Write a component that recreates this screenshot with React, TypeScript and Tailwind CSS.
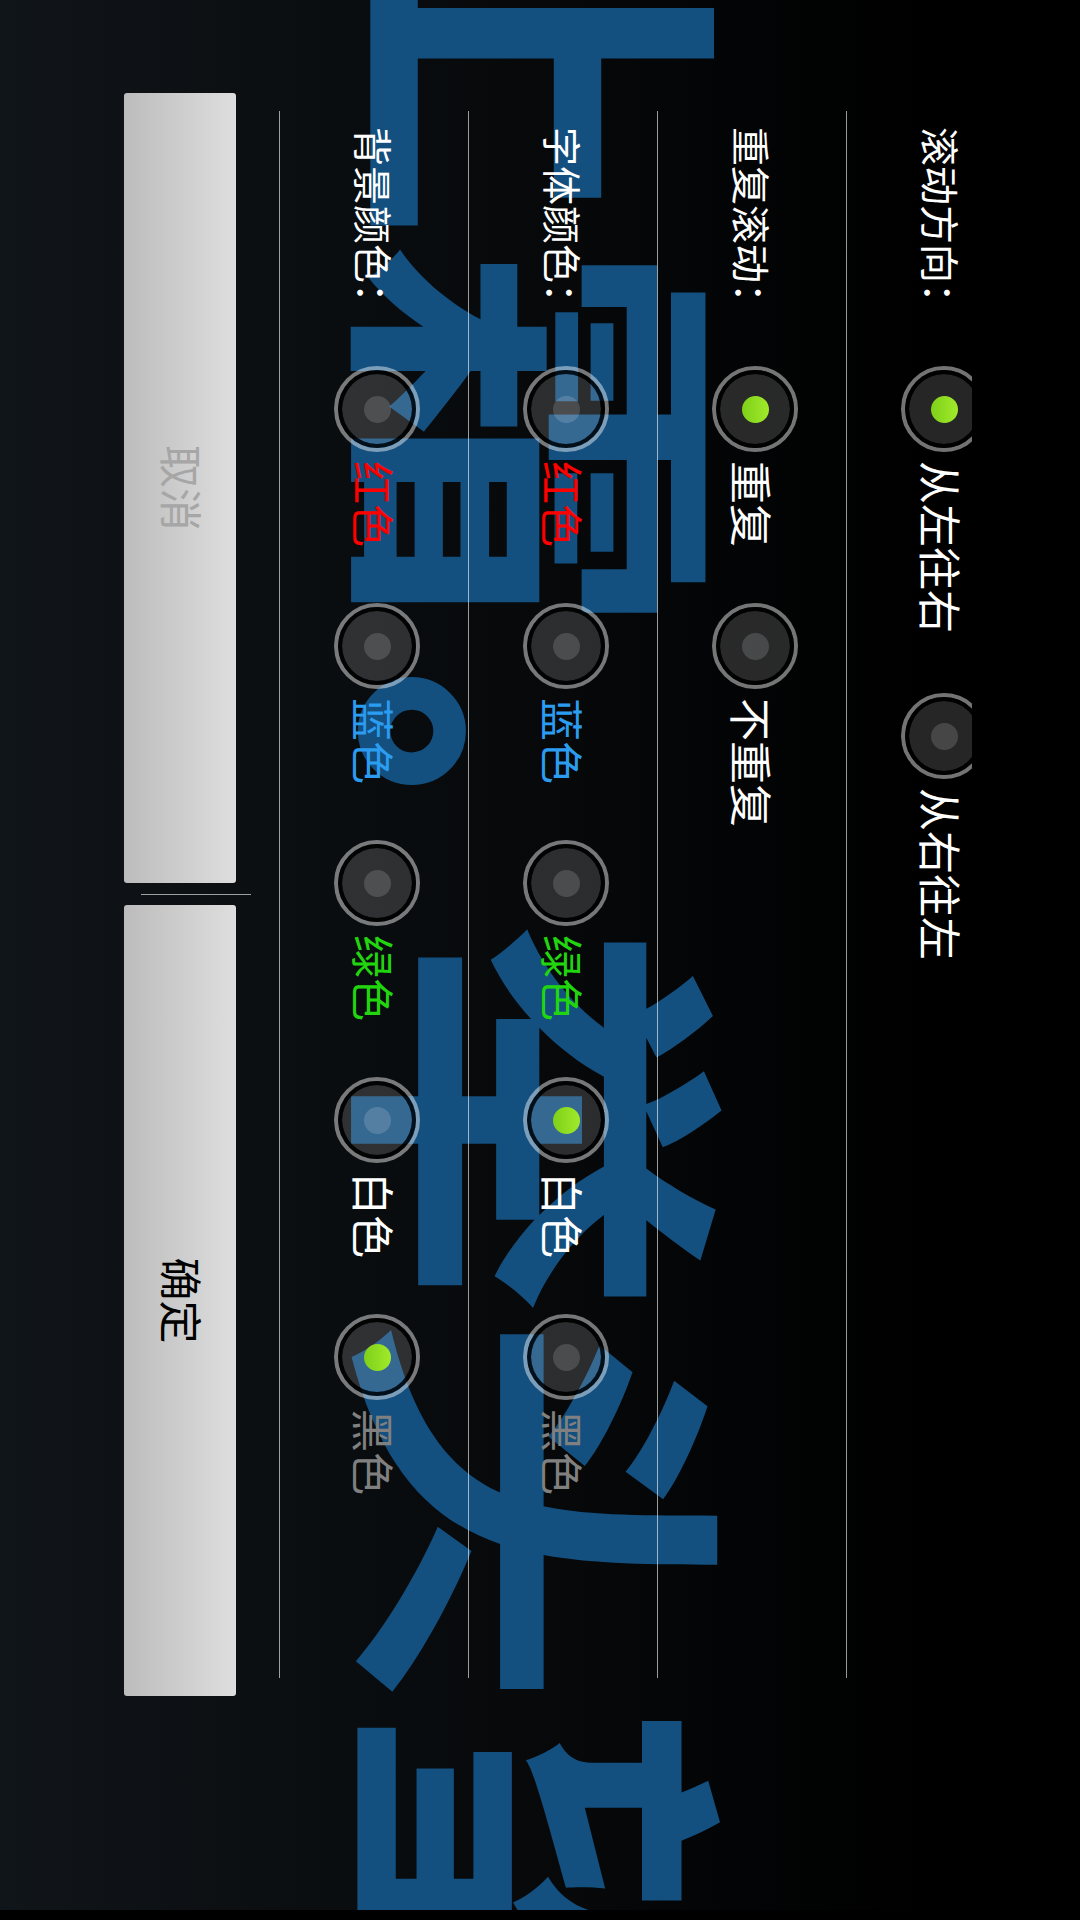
import React from 'react';

interface Option {
  label: string;
  color: string;
  checked?: boolean;
}

interface RowProps {
  title: string;
  options: Option[];
  itemClass?: string;
}

const colorOptions = (checked: string): Option[] =>
  [
    { label: '红色', color: 'text-[#ff0000]' },
    { label: '蓝色', color: 'text-[#2b9cf0]' },
    { label: '绿色', color: 'text-[#22d60f]' },
    { label: '白色', color: 'text-white' },
    { label: '黑色', color: 'text-[#808080]' },
  ].map((o) => ({ ...o, checked: o.label === checked }));

const Radio = ({ checked }: { checked?: boolean }) => (
  <div className="flex h-[86px] w-[86px] shrink-0 items-center justify-center rounded-full border-[4px] border-white/45 blur-[0.5px]">
    <div className="flex h-[78px] w-[78px] items-center justify-center rounded-full border-[4px] border-black/80 bg-white/15 bg-clip-padding">
      {checked ? (
        <div className="h-[27px] w-[27px] rounded-full bg-gradient-to-b from-[#a0ea2a] to-[#7fd01a]" />
      ) : (
        <div className="h-[27px] w-[27px] rounded-full bg-white/15" />
      )}
    </div>
  </div>
);

const Row = ({ title, options, itemClass = 'w-[237px]' }: RowProps) => (
  <div className="flex h-[189px] items-center border-b border-white/60 pb-[7px] pl-[16px]">
    <div className="mt-[6px] w-[239px] shrink-0 text-[39px] text-white">{title}</div>
    {options.map((o) => (
      <div key={o.label} className={`flex shrink-0 items-center gap-[9px] ${itemClass}`}>
        <Radio checked={o.checked} />
        <span className={`mt-[6px] whitespace-nowrap text-[43px] ${o.color}`}>{o.label}</span>
      </div>
    ))}
  </div>
);

export default function App() {
  return (
    <div className="h-[1920px] w-[1080px] overflow-hidden bg-black font-['Noto_Sans_CJK_SC',sans-serif]">
      {/* the whole screen is a landscape page turned on its side */}
      <div className="flex h-[1080px] w-[1920px] origin-top-left translate-x-[1080px] rotate-90">
        <div className="relative h-full w-[1910px] overflow-hidden bg-linear-to-b/srgb from-black from-[15%] to-[#101519]">
          <div className="absolute left-[-3678px] top-[327px] whitespace-nowrap text-[392px] font-bold leading-none text-[#134f7f]">
            床前明月光，疑是地上霜
            <span className="ml-[39px] mr-[-50px] text-[300px] [-webkit-text-stroke:11px_#134f7f]">。</span>
            举头望明月
          </div>

          <div className="relative">
            <div className="ml-[111px] mt-[108px] w-[1567px] overflow-hidden">
              <div className="mt-[-63px]">
                <Row
                  title="滚动方向："
                  itemClass="w-[327px]"
                  options={[
                    { label: '从左往右', color: 'text-white', checked: true },
                    { label: '从右往左', color: 'text-white' },
                  ]}
                />
                <Row
                  title="重复滚动："
                  options={[
                    { label: '重复', color: 'text-white', checked: true },
                    { label: '不重复', color: 'text-white' },
                  ]}
                />
                <Row title="字体颜色：" options={colorOptions('白色')} />
                <Row title="背景颜色：" options={colorOptions('黑色')} />
              </div>
            </div>

            <div className="ml-[93px] mt-[28px] flex items-start">
              <button className="mt-[15px] flex h-[112px] w-[790px] items-center justify-center rounded-[3px] bg-linear-to-b/srgb from-[#dedede] to-[#bcbcbc] pb-[5px] text-[43px] text-[#a6a6a6]">
                取消
              </button>
              <div className="ml-[11px] mr-[10px] h-[110px] w-px bg-white/60" />
              <button className="mt-[15px] flex h-[112px] w-[791px] items-center justify-center rounded-[3px] bg-linear-to-b/srgb from-[#dedede] to-[#bcbcbc] pb-[5px] text-[43px] text-black">
                确定
              </button>
            </div>
          </div>
        </div>
        <div className="h-full w-[10px] bg-black" />
      </div>
    </div>
  );
}
